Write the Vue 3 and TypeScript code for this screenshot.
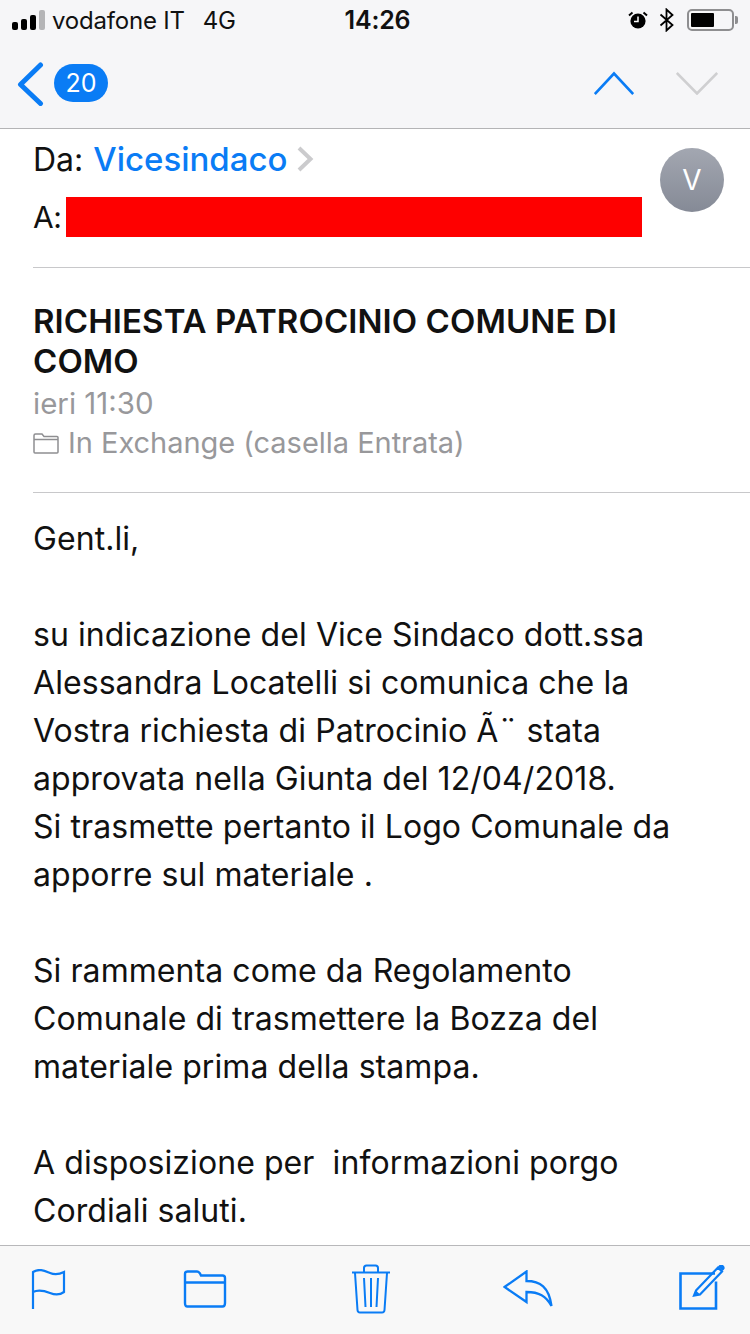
<script setup lang="ts">
const bodyLines: string[] = [
  'Gent.li,',
  '\u00a0',
  'su indicazione del Vice Sindaco dott.ssa',
  'Alessandra Locatelli si comunica che la',
  'Vostra richiesta di Patrocinio Ã¨ stata',
  'approvata nella Giunta del 12/04/2018.',
  'Si trasmette pertanto il Logo Comunale da',
  'apporre sul materiale .',
  '\u00a0',
  'Si rammenta come da Regolamento',
  'Comunale di trasmettere la Bozza del',
  'materiale prima della stampa.',
  '\u00a0',
  'A disposizione per\u00a0 informazioni porgo',
  'Cordiali saluti.',
]
</script>

<template>
  <div class="page">
    <header class="top">
      <div class="status">
        <div class="status-left">
          <div class="signal"><i class="b1"></i><i class="b2"></i><i class="b3"></i><i class="b4"></i></div>
          <span class="carrier">vodafone IT</span>
          <span class="net">4G</span>
        </div>
        <div class="time">14:26</div>
        <div class="status-right">
          <svg class="alarm" width="20" height="20" viewBox="0 0 20 20">
            <circle cx="10" cy="11" r="7.6" fill="#000" />
            <path d="M10 6.500V11.500H6" fill="none" stroke="#fff" stroke-width="1.500" />
            <path d="M1 5.500 4.500 2.500M19 5.500 15.500 2.500" stroke="#000" stroke-width="2" />
          </svg>
          <svg class="bt" width="16" height="24" viewBox="0 0 16 24">
            <path d="M1.500 6.500 13.500 17 7.500 22.500V1.500L13.500 7 1.500 17.500" fill="none" stroke="#000" stroke-width="1.800" />
          </svg>
          <div class="battery"><div class="level"></div></div>
          <div class="nub"></div>
        </div>
      </div>
      <nav class="nav">
        <div class="back">
          <svg class="chev" width="28" height="44" viewBox="0 0 28 44">
            <path d="M24.500 3 4.500 22.500 24.500 41.500" fill="none" stroke="#0a7cf5" stroke-width="5" stroke-linecap="round" stroke-linejoin="round" />
          </svg>
          <span class="count">20</span>
        </div>
        <div class="arrows">
          <svg width="40" height="24" viewBox="0 0 40 24">
            <path d="M0.800 23 20 2.500 39.200 23" fill="none" stroke="#0a7cf5" stroke-width="2.600" />
          </svg>
          <svg width="42" height="24" viewBox="0 0 42 24">
            <path d="M0.800 2 21 22.500 41.200 2" fill="none" stroke="#cfcfd1" stroke-width="2.600" />
          </svg>
        </div>
      </nav>
    </header>

    <main class="mail">
      <section class="people">
        <div class="people-lines">
          <div class="from">
            <span>Da:</span>
            <span class="sender">Vicesindaco</span>
            <svg width="18" height="26" viewBox="0 0 18 26">
              <path d="M3 2 14.500 13 3 24" fill="none" stroke="#cbcbcd" stroke-width="4" />
            </svg>
          </div>
          <div class="to">
            <span class="to-label">A:</span>
            <div class="redact"></div>
          </div>
        </div>
        <div class="avatar">V</div>
      </section>

      <section class="meta">
        <h1 class="subject">RICHIESTA PATROCINIO COMUNE DI COMO</h1>
        <div class="date">ieri 11:30</div>
        <div class="folder">
          <svg width="26" height="21" viewBox="0 0 26 21">
            <path d="M1 19V2.500C1 1.700 1.700 1 2.500 1H9L11 3.500H24C24.600 3.500 25 4 25 4.500V19C25 19.600 24.600 20 24 20H2C1.400 20 1 19.600 1 19ZM1 6.500H25" fill="none" stroke="#8e8e91" stroke-width="1.500" />
          </svg>
          <span>In Exchange (casella Entrata)</span>
        </div>
      </section>

      <section class="body">
        <div v-for="(line, i) in bodyLines" :key="i" class="line">{{ line }}</div>
      </section>
    </main>

    <footer class="toolbar">
      <svg width="36" height="40" viewBox="0 0 36 40">
        <path d="M3 40V3C9-1 15 2 20 4 25 6 30 5 34 3V23C30 26 25 26 20 24 15 22 9 20 3 23" fill="none" stroke="#0a7cf5" stroke-width="2.200" />
      </svg>
      <svg width="44" height="38" viewBox="0 0 44 38">
        <path d="M2 33V4C2 2.500 3 1.500 4.500 1.500H14C15.500 1.500 16 2 17 3.500L18 5.500H39.500C41 5.500 42 6.500 42 8V33C42 35.500 41 36.500 39.500 36.500H4.500C3 36.500 2 35.500 2 33ZM2 12.500H42" fill="none" stroke="#0a7cf5" stroke-width="2.400" />
      </svg>
      <svg width="40" height="50" viewBox="0 0 40 50">
        <path d="M1 8.500H39M13 8V4C13 2.500 14 1.500 15.500 1.500H24.500C26 1.500 27 2.500 27 4V8M4 9 6.500 46C6.600 47.500 7.500 48.500 9 48.500H31C32.500 48.500 33.400 47.500 33.500 46L36 9M13 14 14.500 43M20 14V43M27 14 25.500 43" fill="none" stroke="#0a7cf5" stroke-width="2" />
      </svg>
      <svg width="50" height="38" viewBox="0 0 50 38">
        <path d="M1.500 17 23.500 1.500V11C37 11 46 17 48.500 36 43 26 36 22 23.500 22V32Z" fill="none" stroke="#0a7cf5" stroke-width="2.300" />
      </svg>
      <svg width="48" height="48" viewBox="0 0 48 48">
        <g transform="translate(0 -2.500)">
          <path d="M36 11H1.500V46H37V19" fill="none" stroke="#0a7cf5" stroke-width="2.600" />
          <path d="M17 28 39 5 43 9 21 32 15 33Z" fill="none" stroke="#0a7cf5" stroke-width="2.200" />
          <path d="M40.500 2.500C41.500 1.500 43 1.500 44.500 3 46 4.500 46 6 45 7L43.500 8.500 39 4Z" fill="#0a7cf5" />
          <path d="M15 33 16.500 27.500 20.500 31.500Z" fill="#0a7cf5" />
        </g>
      </svg>
    </footer>
  </div>
</template>

<style>
html, body { margin: 0; padding: 0; background: #fff; }
</style>

<style scoped>
.page {
  width: 750px;
  height: 1334px;
  display: flex;
  flex-direction: column;
  overflow: hidden;
  font-family: Inter, "Liberation Sans", sans-serif;
  color: #111;
  background: #fff;
}
.top {
  height: 129px;
  box-sizing: border-box;
  flex: none;
  background: #f6f6f8;
  border-bottom: 1px solid #b4b4b6;
  display: flex;
  flex-direction: column;
}
.status {
  height: 40px;
  padding: 0 12px;
  display: grid;
  grid-template-columns: 1fr auto 1fr;
  align-items: center;
  font-size: 24px;
  letter-spacing: -0.2px;
}
.status-left { display: flex; align-items: center; gap: 7px; }
.signal { display: flex; align-items: flex-end; gap: 3px; height: 20px; }
.signal i { width: 6px; background: #000; border-radius: 2px; display: block; }
.b1 { height: 8px; }
.b2 { height: 11px; }
.b3 { height: 15px; }
.signal .b4 { height: 20px; background: #b5b5b7; }
.net { margin-left: 11px; }
.time { font-weight: 600; font-size: 25px; margin-left: 5px; }
.status-right { display: flex; align-items: center; justify-content: flex-end; }
.alarm { margin-right: 11px; }
.bt { margin-right: 12px; }
.battery {
  width: 47px;
  height: 22px;
  box-sizing: border-box;
  border: 2px solid #8e8e90;
  border-radius: 5px;
  padding: 2px;
}
.level { width: 23px; height: 100%; background: #000; border-radius: 1px; }
.nub { width: 3px; height: 8px; background: #8e8e90; border-radius: 0 2px 2px 0; margin-left: 1px; }
.nav {
  flex: 1;
  display: flex;
  align-items: center;
  justify-content: space-between;
  padding: 0 32px 2px 16px;
}
.back { display: flex; align-items: center; gap: 10px; }
.chev { margin-top: 2px; }
.count {
  width: 54px;
  height: 38px;
  border-radius: 19px;
  background: #0a7cf5;
  color: #fff;
  font-size: 25px;
  display: flex;
  align-items: center;
  justify-content: center;
}
.arrows { display: flex; align-items: center; gap: 42px; }
.mail { flex: 1; min-height: 0; overflow: hidden; padding-left: 33px; }
.people {
  height: 139px;
  box-sizing: border-box;
  border-bottom: 1px solid #c8c8ca;
  display: flex;
  justify-content: space-between;
  align-items: flex-start;
  padding: 7px 26px 0 0;
  font-size: 32px;
}
.people-lines { display: flex; flex-direction: column; }
.from { display: flex; align-items: center; height: 46px; gap: 10px; }
.sender { color: #0a7cf5; font-weight: 500; font-size: 33px; }
.from svg { margin-left: -1px; }
.to { display: flex; align-items: center; margin-top: 15px; }
.to-label { width: 33px; font-size: 30px; letter-spacing: -0.5px; }
.redact { width: 576px; height: 40px; background: #fe0000; }
.avatar {
  width: 64px;
  height: 64px;
  margin-top: 12px;
  border-radius: 50%;
  background: linear-gradient(#a3a7b1, #858a96);
  color: #fff;
  font-size: 28px;
  display: flex;
  align-items: center;
  justify-content: center;
}
.meta {
  height: 225px;
  box-sizing: border-box;
  border-bottom: 1px solid #c8c8ca;
  padding-top: 33px;
}
.subject {
  margin: 0;
  width: 620px;
  font-size: 33px;
  font-weight: 600;
  line-height: 40px;
  letter-spacing: 0.07px;
}
.date, .folder { color: #98989b; line-height: 40px; }
.date { margin-top: 2px; font-size: 29.5px; }
.folder { display: flex; align-items: center; gap: 9px; font-size: 29px; letter-spacing: -0.03px; }
.body { padding-top: 22px; font-size: 32px; line-height: 48px; letter-spacing: 0.07px; white-space: nowrap; }
.line { height: 48px; }
.toolbar {
  height: 89px;
  flex: none;
  box-sizing: border-box;
  background: #f8f8f8;
  border-top: 1px solid #b8b8ba;
  padding: 0 0 2px 30px;
  display: grid;
  grid-template-columns: 153px 168px 152px 176px auto;
  justify-content: start;
  align-items: center;
}
</style>
